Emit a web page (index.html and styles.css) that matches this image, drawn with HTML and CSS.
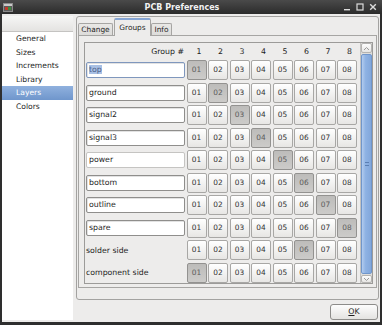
FILE: index.html
```html
<!DOCTYPE html>
<html lang="en">
<head>
    <meta charset="UTF-8">
    <title>PCB Preferences</title>
    <link rel="stylesheet" href="styles.css">
</head>
<body>
<div class="window">
    <div class="titlebar">
        <svg class="app-icon" width="10" height="9" viewBox="0 0 10 9">
            <rect x="0.5" y="0.5" width="9" height="8" fill="#5a5a5a" stroke="#8a8a8a"/>
            <rect x="1" y="1" width="8" height="2" fill="#c9c9c9"/>
            <rect x="2" y="4" width="3" height="3" fill="#c0392b"/>
            <rect x="5" y="4" width="3" height="3" fill="#3d8b3d"/>
        </svg>
        <div class="title">PCB Preferences</div>
        <div class="wm-buttons">
            <svg width="8" height="8" viewBox="0 0 8 8"><rect x="1" y="6" width="6" height="1.4" fill="#dcdcdc"/></svg>
            <svg width="8" height="8" viewBox="0 0 8 8"><rect x="1" y="1" width="6" height="6" fill="none" stroke="#dcdcdc" stroke-width="1.2"/></svg>
            <svg width="8" height="8" viewBox="0 0 8 8"><path d="M1.2 1.2 L6.8 6.8 M6.8 1.2 L1.2 6.8" stroke="#dcdcdc" stroke-width="1.4"/></svg>
        </div>
    </div>

    <div class="body">
        <div class="sidebar">
            <div class="side-head"></div>
            <div class="side-item">General</div>
            <div class="side-item">Sizes</div>
            <div class="side-item">Increments</div>
            <div class="side-item">Library</div>
            <div class="side-item active">Layers</div>
            <div class="side-item">Colors</div>
        </div>

        <div class="main">
            <div class="pane">
                <div class="tabs">
                    <div class="tab tab-change">Change</div>
                    <div class="tab tab-groups current">Groups</div>
                    <div class="tab tab-info">Info</div>
                </div>
                <div class="page">
                    <div class="scroller">
                        <div class="groups">
                            <div class="hdr-label">Group #</div>
                            <div class="hdr-num">1</div><div class="hdr-num">2</div><div class="hdr-num">3</div><div class="hdr-num">4</div>
                            <div class="hdr-num">5</div><div class="hdr-num">6</div><div class="hdr-num">7</div><div class="hdr-num">8</div>

                            <div class="entry focus"><span class="sel">top</span></div>
                            <div class="gbtn on">01</div><div class="gbtn">02</div><div class="gbtn">03</div><div class="gbtn">04</div>
                            <div class="gbtn">05</div><div class="gbtn">06</div><div class="gbtn">07</div><div class="gbtn">08</div>

                            <div class="entry">ground</div>
                            <div class="gbtn">01</div><div class="gbtn on">02</div><div class="gbtn">03</div><div class="gbtn">04</div>
                            <div class="gbtn">05</div><div class="gbtn">06</div><div class="gbtn">07</div><div class="gbtn">08</div>

                            <div class="entry">signal2</div>
                            <div class="gbtn">01</div><div class="gbtn">02</div><div class="gbtn on">03</div><div class="gbtn">04</div>
                            <div class="gbtn">05</div><div class="gbtn">06</div><div class="gbtn">07</div><div class="gbtn">08</div>

                            <div class="entry">signal3</div>
                            <div class="gbtn">01</div><div class="gbtn">02</div><div class="gbtn">03</div><div class="gbtn on">04</div>
                            <div class="gbtn">05</div><div class="gbtn">06</div><div class="gbtn">07</div><div class="gbtn">08</div>

                            <div class="entry flat">power</div>
                            <div class="gbtn">01</div><div class="gbtn">02</div><div class="gbtn">03</div><div class="gbtn">04</div>
                            <div class="gbtn on">05</div><div class="gbtn">06</div><div class="gbtn">07</div><div class="gbtn">08</div>

                            <div class="entry">bottom</div>
                            <div class="gbtn">01</div><div class="gbtn">02</div><div class="gbtn">03</div><div class="gbtn">04</div>
                            <div class="gbtn">05</div><div class="gbtn on">06</div><div class="gbtn">07</div><div class="gbtn">08</div>

                            <div class="entry">outline</div>
                            <div class="gbtn">01</div><div class="gbtn">02</div><div class="gbtn">03</div><div class="gbtn">04</div>
                            <div class="gbtn">05</div><div class="gbtn">06</div><div class="gbtn on">07</div><div class="gbtn">08</div>

                            <div class="entry">spare</div>
                            <div class="gbtn">01</div><div class="gbtn">02</div><div class="gbtn">03</div><div class="gbtn">04</div>
                            <div class="gbtn">05</div><div class="gbtn">06</div><div class="gbtn">07</div><div class="gbtn on">08</div>

                            <div class="label">solder side</div>
                            <div class="gbtn">01</div><div class="gbtn">02</div><div class="gbtn">03</div><div class="gbtn">04</div>
                            <div class="gbtn">05</div><div class="gbtn on">06</div><div class="gbtn">07</div><div class="gbtn">08</div>

                            <div class="label">component side</div>
                            <div class="gbtn on">01</div><div class="gbtn">02</div><div class="gbtn">03</div><div class="gbtn">04</div>
                            <div class="gbtn">05</div><div class="gbtn">06</div><div class="gbtn">07</div><div class="gbtn">08</div>
                        </div>
                        <div class="vscroll">
                            <div class="arrow">
                                <svg width="7" height="5" viewBox="0 0 7 5"><path d="M1 4 L3.5 1.5 L6 4" fill="none" stroke="#9a9a9a" stroke-width="1"/></svg>
                            </div>
                            <div class="thumb"><div class="grip"></div></div>
                            <div class="arrow down">
                                <svg width="7" height="5" viewBox="0 0 7 5"><path d="M1 1 L3.5 3.5 L6 1" fill="none" stroke="#9a9a9a" stroke-width="1"/></svg>
                            </div>
                        </div>
                    </div>
                </div>
            </div>
            <div class="actions">
                <div class="ok-btn"><u>O</u>K</div>
            </div>
        </div>
    </div>
</div>
</body>
</html>
```

FILE: styles.css
```css
body {
    margin: 0;
    background: #2e2e2e;
    font-family: "DejaVu Sans", sans-serif;
    font-size: 7.8px;
    color: #1e1e1e;
}
.window {
    width: 382px;
    height: 325px;
    display: flex;
    flex-direction: column;
    background: #2e2e2e;
}

/* title bar */
.titlebar {
    height: 15px;
    display: flex;
    align-items: center;
    background: linear-gradient(#4a4a4a, #2b2b2b);
}
.app-icon {
    margin-left: 3px;
    width: 10px;
    height: 9px;
}
.title {
    flex: 1;
    text-align: center;
    color: #f2f2f2;
    font-weight: bold;
    font-size: 8px;
    padding-left: 8px;
}
.wm-buttons {
    display: flex;
    gap: 5px;
    margin-right: 5px;
}

.body {
    flex: 1;
    display: flex;
    margin: 0 2px 3px 2px;
    padding: 2px 0;
    background: #edeceb;
}

/* left list */
.sidebar {
    width: 71px;
    background: #fff;
}
.side-head {
    height: 15px;
    background: linear-gradient(#f6f6f5, #e4e3e1);
    border-bottom: 1px solid #c4c3c1;
}
.side-item {
    height: 13.6px;
    line-height: 13.6px;
    padding-left: 14px;
    font-size: 7.6px;
}
.side-item.active {
    background: linear-gradient(#90b1de, #6f96cc);
    color: #fff;
}

.main {
    flex: 1;
    display: flex;
    flex-direction: column;
    padding: 0 1px 0 3px;
}
.pane {
    height: 284px;
    box-sizing: border-box;
    border: 1px solid #a3a2a0;
    border-radius: 3px;
}

/* notebook tabs */
.tabs {
    height: 18px;
    display: flex;
    align-items: flex-end;
    padding-left: 1px;
}
.tab {
    box-sizing: border-box;
    height: 12px;
    line-height: 11px;
    text-align: center;
    font-size: 7.4px;
    background: linear-gradient(#e9e8e6, #dddcda);
    border: 1px solid #a6a5a3;
    border-bottom: none;
    border-radius: 2px 2px 0 0;
}
.tab-change { width: 35px; margin-right: 1px; }
.tab-groups { width: 37px; }
.tab-info { width: 21px; }
.tab.current {
    height: 18px;
    line-height: 15px;
    background: #edeceb;
    border-top: 2px solid #87a6d4;
    margin-bottom: -1px;
    position: relative;
    z-index: 1;
}

.page {
    height: 253px;
    box-sizing: border-box;
    margin: 0 1px;
    border: 1px solid #a6a5a3;
    padding: 6px 3px 3px 5px;
}
.scroller {
    height: 242px;
    box-sizing: border-box;
    border: 1px solid #9c9b99;
    display: flex;
}

/* group grid */
.groups {
    flex: 1;
    display: grid;
    grid-template-columns: 99px repeat(8, 20px);
    grid-template-rows: 14.5px;
    grid-auto-rows: 20px;
    column-gap: 1.5px;
    row-gap: 2.5px;
    padding-left: 1px;
    align-content: start;
}
.hdr-label {
    text-align: right;
    align-self: center;
    padding-right: 1px;
    margin-top: 2px;
}
.hdr-num {
    text-align: center;
    align-self: center;
    padding-left: 5px;
    margin-top: 2px;
}
.entry {
    align-self: center;
    height: 16px;
    box-sizing: border-box;
    border: 1px solid #8f8e8c;
    border-radius: 2px;
    background: #fff;
    box-shadow: inset 1px 1px 0 #e2e2e2;
    line-height: 14px;
    padding-left: 2px;
    white-space: nowrap;
}
.entry.flat {
    border-color: #c5c4c2;
    box-shadow: none;
}
.entry.focus {
    border-color: #7f97bd;
}
.sel {
    background: #a9c0e4;
    color: #4c6189;
}
.label {
    align-self: center;
    padding-left: 0;
    white-space: nowrap;
}
.gbtn {
    box-sizing: border-box;
    border: 1px solid #a8a7a5;
    border-radius: 2px;
    background: linear-gradient(#ffffff, #e7e6e4);
    text-align: center;
    line-height: 18px;
    color: #333;
    font-size: 7.4px;
}
.gbtn.on {
    background: linear-gradient(#bdbcba, #cccbc9);
    border-color: #939290;
    color: #5c5c5c;
}

/* scrollbar */
.vscroll {
    width: 11px;
    display: flex;
    flex-direction: column;
    background: #dedddb;
    border-left: 1px solid #c3c2c0;
}
.arrow {
    height: 10px;
    box-sizing: border-box;
    border: 1px solid #b4b3b1;
    border-radius: 2px;
    background: linear-gradient(#fdfdfd, #e6e5e3);
    display: flex;
    align-items: center;
    justify-content: center;
}
.arrow.down {
    height: 8px;
}
.thumb {
    flex: 1;
    margin: 1px 0;
    border: 1px solid #7096cb;
    border-radius: 2px;
    background: linear-gradient(90deg, #b2cbee, #8eb2e3 40%, #82a7db);
    display: flex;
    align-items: center;
    justify-content: center;
}
.grip {
    width: 4px;
    height: 2px;
    border-top: 1px solid #5b7fb3;
    border-bottom: 1px solid #5b7fb3;
}

/* dialog buttons */
.actions {
    display: flex;
    justify-content: flex-end;
    margin-top: 4px;
    padding-right: 1px;
}
.ok-btn {
    width: 48px;
    height: 16px;
    box-sizing: border-box;
    border: 1px solid #8d8c8a;
    border-radius: 3px;
    background: linear-gradient(#fdfdfd, #e4e3e1);
    text-align: center;
    line-height: 14px;
}
```
